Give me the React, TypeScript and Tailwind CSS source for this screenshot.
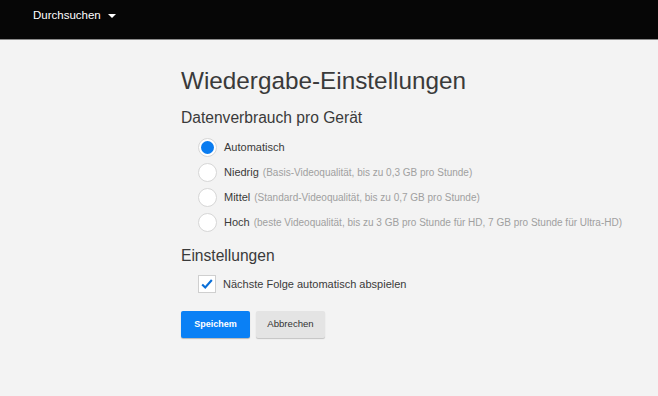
import React, { useState } from "react";

const options = [
  { id: "auto", label: "Automatisch", note: "" },
  { id: "low", label: "Niedrig", note: "(Basis-Videoqualität, bis zu 0,3 GB pro Stunde)" },
  { id: "mid", label: "Mittel", note: "(Standard-Videoqualität, bis zu 0,7 GB pro Stunde)" },
  {
    id: "high",
    label: "Hoch",
    note: "(beste Videoqualität, bis zu 3 GB pro Stunde für HD, 7 GB pro Stunde für Ultra-HD)",
  },
];

const App = () => {
  const [selected, setSelected] = useState("auto");
  const [autoplay, setAutoplay] = useState(true);

  return (
    <div className="min-h-[396px] bg-[#f3f3f3] font-['Liberation_Sans',Arial,sans-serif] text-[#333]">
      <header className="flex h-[40px] items-start border-b border-[#8a8a8a] bg-[#060606] pl-[33px] pt-[8px]">
        <button className="flex items-center gap-[7px] text-[11.5px] leading-[14px] text-white">
          Durchsuchen
          <span className="mt-[1px] h-0 w-0 border-x-[4px] border-t-[4px] border-x-transparent border-t-white" />
        </button>
      </header>

      <main className="pl-[181px] pt-[26px]">
        <h1 className="text-[24.3px] leading-[30px] text-[#3a3a3a]">Wiedergabe-Einstellungen</h1>

        <h2 className="mt-[12px] text-[15.6px] leading-[20px] text-[#3a3a3a]">Datenverbrauch pro Gerät</h2>

        <div className="mt-[10px] flex flex-col gap-[6px] pl-[17px]">
          {options.map((o) => (
            <label key={o.id} className="flex h-[19px] cursor-pointer items-center whitespace-nowrap">
              <span className="flex h-[19px] w-[19px] items-center justify-center rounded-full border border-[#d6d6d6] bg-white">
                {selected === o.id && <span className="h-[13px] w-[13px] rounded-full bg-[#0a7cf0]" />}
              </span>
              <input
                type="radio"
                name="usage"
                className="hidden"
                checked={selected === o.id}
                onChange={() => setSelected(o.id)}
              />
              <span className="ml-[7px] text-[11px] text-[#3a3a3a]">{o.label}</span>
              {o.note && <span className="ml-[4px] text-[10px] text-[#a0a0a0]">{o.note}</span>}
            </label>
          ))}
        </div>

        <h2 className="mt-[14px] text-[15.6px] leading-[20px] text-[#3a3a3a]">Einstellungen</h2>

        <label className="mt-[9px] flex cursor-pointer items-center pl-[17px]">
          <span className="flex h-[18px] w-[18px] items-center justify-center border border-[#cfcfcf] bg-white">
            {autoplay && (
              <svg viewBox="0 0 16 16" className="h-[14px] w-[14px]">
                <path d="M2.5 8.5 L6 12 L13.5 3.5" fill="none" stroke="#0a6fd8" strokeWidth="2.4" />
              </svg>
            )}
          </span>
          <input
            type="checkbox"
            className="hidden"
            checked={autoplay}
            onChange={(e) => setAutoplay(e.target.checked)}
          />
          <span className="ml-[7px] text-[11px] text-[#3a3a3a]">Nächste Folge automatisch abspielen</span>
        </label>

        <div className="mt-[18px] flex gap-[6px]">
          <button className="h-[27px] w-[69px] rounded-[2px] bg-[#0a80f5] text-[9px] font-bold text-white shadow-[0_1px_1px_rgba(0,0,0,0.25)]">
            Speichem
          </button>
          <button className="h-[27px] w-[69px] rounded-[2px] bg-[#e4e4e4] text-[9.6px] text-[#333] shadow-[0_1px_1px_rgba(0,0,0,0.2)]">
            Abbrechen
          </button>
        </div>
      </main>
    </div>
  );
};

export default App;
